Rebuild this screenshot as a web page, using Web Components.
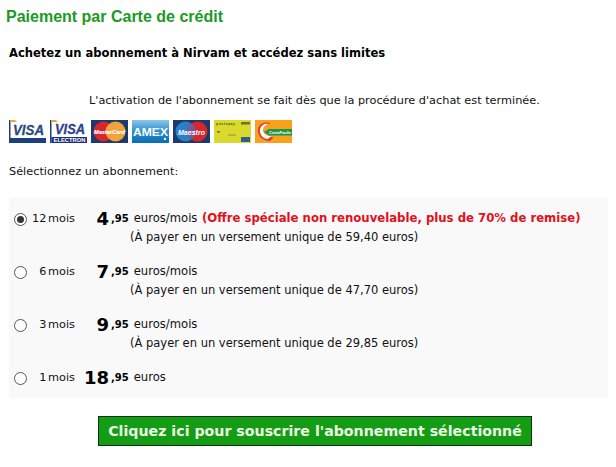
<!DOCTYPE html>
<html lang="fr">
<head>
<meta charset="utf-8">
<title>Paiement par Carte de crédit</title>
<style>
    html, body { margin: 0; background: #fff; }
    body { font-family: "DejaVu Sans", Verdana, sans-serif; font-size: 11.3px; color: #111; }
</style>
</head>
<body>
<payment-page>
    <card-logos slot="logos"></card-logos>
    <plan-row slot="plans" months="12 mois" whole="4" unit="euros/mois" note="(À payer en un versement unique de 59,40 euros)" selected>
        <b>(Offre spéciale non renouvelable, plus de 70% de remise)</b>
    </plan-row>
    <plan-row slot="plans" months="6 mois" whole="7" unit="euros/mois" note="(À payer en un versement unique de 47,70 euros)"></plan-row>
    <plan-row slot="plans" months="3 mois" whole="9" unit="euros/mois" note="(À payer en un versement unique de 29,85 euros)"></plan-row>
    <plan-row slot="plans" months="1 mois" whole="18" unit="euros"></plan-row>
</payment-page>

<script>
const pageTemplate = document.createElement('template');
pageTemplate.innerHTML = `
    <style>
        :host {
            display: block;
            width: 616px;
            height: 467px;
            overflow: hidden;
        }
        h1 {
            font: bold 16px "Liberation Sans", Arial, sans-serif;
            color: #1a9a1f;
            margin: 0;
            padding: 7px 0 0 6px;
            line-height: 19px;
        }
        h2 {
            font-size: 11.55px;
            font-weight: bold;
            color: #000;
            margin: 0;
            padding: 20px 0 0 9px;
            line-height: 14px;
        }
        .intro {
            margin: 0;
            padding: 34px 0 0 89px;
            line-height: 14px;
        }
        .logos {
            padding: 12px 0 0 9px;
            height: 23px;
        }
        .pick {
            margin: 0;
            padding: 22px 0 0 9px;
            line-height: 14px;
        }
        .plans {
            margin: 18px 0 0 9px;
            width: 599px;
            height: 201px;
            background: #f9f9f9;
            box-sizing: border-box;
        }
        .action {
            display: flex;
            padding: 18px 0 0 98px;
        }
        button {
            font-family: "DejaVu Sans", Verdana, sans-serif;
            font-size: 14.2px;
            font-weight: bold;
            white-space: nowrap;
            color: #eaf7e4;
            background: #149c14;
            border: 1px solid #04360a;
            width: 434px;
            height: 30px;
            padding: 0;
            cursor: pointer;
        }
    </style>
    <h1>Paiement par Carte de crédit</h1>
    <h2>Achetez un abonnement à Nirvam et accédez sans limites</h2>
    <p class="intro">L'activation de l'abonnement se fait dès que la procédure d'achat est terminée.</p>
    <div class="logos"><slot name="logos"></slot></div>
    <p class="pick">Sélectionnez un abonnement:</p>
    <div class="plans"><slot name="plans"></slot></div>
    <div class="action"><button type="button">Cliquez ici pour souscrire l'abonnement sélectionné</button></div>
`;

class PaymentPage extends HTMLElement {
    constructor() {
        super();
        this.attachShadow({ mode: 'open' });
        this.shadowRoot.appendChild(pageTemplate.content.cloneNode(true));
    }
}

const logosTemplate = document.createElement('template');
logosTemplate.innerHTML = `
    <style>
        :host { display: flex; gap: 4px; }
        svg { display: block; width: 37px; height: 23px; }
        text { font-family: "Liberation Sans", Arial, sans-serif; }
    </style>
    <!-- visa -->
    <svg viewBox="0 0 37 23">
        <rect width="37" height="23" fill="#fff"/>
        <path d="M0 0H1.5V18H37V23H0Z" fill="#1c3f80"/>
        <path d="M1 0H6L8 2H1Z" fill="#e2a93a"/>
        <text x="19.5" y="14.5" text-anchor="middle" font-size="14" font-weight="bold" font-style="italic" fill="#27497f" stroke="#27497f" stroke-width="0.3" textLength="31" lengthAdjust="spacingAndGlyphs">VISA</text>
    </svg>
    <!-- visa electron -->
    <svg viewBox="0 0 37 23">
        <rect width="37" height="23" fill="#fff"/>
        <path d="M0 0H1.5V23H0Z" fill="#1c3f80"/>
        <path d="M1 0H6L8 2H1Z" fill="#e2a93a"/>
        <text x="20" y="14" text-anchor="middle" font-size="14" font-weight="bold" font-style="italic" fill="#2a3f8c" stroke="#2a3f8c" stroke-width="0.3" textLength="30" lengthAdjust="spacingAndGlyphs">VISA</text>
        <rect x="1.5" y="17" width="35.5" height="6" fill="#1b2f7c"/>
        <text x="19.5" y="22" text-anchor="middle" font-size="5.4" font-weight="bold" fill="#fff" textLength="32" lengthAdjust="spacingAndGlyphs">ELECTRON</text>
    </svg>
    <!-- mastercard -->
    <svg viewBox="0 0 37 23">
        <rect width="37" height="23" fill="#1d3a6e"/>
        <circle cx="12.5" cy="11.5" r="10" fill="#d8262e"/>
        <circle cx="24.5" cy="11.5" r="10" fill="#f0a33a"/>
        <text x="18.5" y="13.8" text-anchor="middle" font-size="5.9" font-weight="bold" font-style="italic" fill="#fff" stroke="#fff" stroke-width="0.15" textLength="31" lengthAdjust="spacingAndGlyphs">MasterCard</text>
    </svg>
    <!-- amex -->
    <svg viewBox="0 0 37 23">
        <defs><linearGradient id="amex" x1="0" y1="0" x2="0" y2="1">
            <stop offset="0" stop-color="#8cc4e6"/><stop offset="0.5" stop-color="#2d8fd0"/><stop offset="1" stop-color="#0a6db4"/>
        </linearGradient></defs>
        <rect width="37" height="23" fill="url(#amex)"/>
        <text x="18.5" y="15.5" text-anchor="middle" font-size="11.5" font-weight="bold" fill="#fff" textLength="35" lengthAdjust="spacingAndGlyphs">AMEX</text>
        <rect x="32" y="18" width="2" height="2" fill="#fff"/>
    </svg>
    <!-- maestro -->
    <svg viewBox="0 0 37 23">
        <rect width="37" height="23" fill="#1d3a6e"/>
        <circle cx="12.5" cy="11.5" r="10" fill="#2a80c8"/>
        <circle cx="24.5" cy="11.5" r="10" fill="#d8262e"/>
        <path d="M18.5 3.5a10 10 0 0 1 0 16a10 10 0 0 1 0-16Z" fill="#7a5a96"/>
        <text x="18.5" y="14.5" text-anchor="middle" font-size="7.8" font-weight="bold" font-style="italic" fill="#fff" textLength="27" lengthAdjust="spacingAndGlyphs">Maestro</text>
    </svg>
    <!-- postepay -->
    <svg viewBox="0 0 37 23">
        <rect width="37" height="23" fill="#d9d92e"/>
        <text x="2" y="4.5" font-size="3.6" font-style="italic" font-weight="bold" fill="#55581a" textLength="19">postepay</text>
        <rect x="27" y="2" width="9" height="2.5" fill="#6d7030"/>
        <rect x="3" y="11" width="3" height="1.5" fill="#6d7030"/>
        <rect x="14" y="14.5" width="8" height="1" fill="#8b8e3a"/>
        <rect x="27" y="17" width="9" height="5" fill="#2f5f8f"/>
    </svg>
    <!-- carta facile -->
    <svg viewBox="0 0 37 23">
        <rect width="37" height="23" fill="#f9a11b"/>
        <path d="M3 9C4 3 12 1 16 4C11 3 7 6 7 10C7 15 13 18 19 17L15 21C8 21 2 16 3 9Z" fill="#e0373c"/>
        <path d="M5 9C6 5 10 3 13 4C10 5 8 7 8 10C8 14 12 16 16 16L13 19C8 19 4 14 5 9Z" fill="#fff"/>
        <path d="M9 12L14 9H37V15.5H14Z" fill="#19964a"/>
        <text x="25" y="13.6" text-anchor="middle" font-size="4.2" font-weight="bold" fill="#fff" textLength="22" lengthAdjust="spacingAndGlyphs">CartaFacile</text>
    </svg>
`;

class CardLogos extends HTMLElement {
    constructor() {
        super();
        this.attachShadow({ mode: 'open' });
        this.shadowRoot.appendChild(logosTemplate.content.cloneNode(true));
    }
}

const planTemplate = document.createElement('template');
planTemplate.innerHTML = `
    <style>
        :host {
            display: grid;
            grid-template-columns: 5px 13px 48px 34px 2px 1fr;
            height: 53px;
            box-sizing: border-box;
            align-content: start;
            padding-top: 12px;
            line-height: 19px;
        }
        .radio {
            grid-column: 2;
            width: 13px;
            height: 13px;
            margin-top: 4px;
            box-sizing: border-box;
            border: 1px solid #555;
            border-radius: 50%;
            background: #fff;
            display: flex;
            align-items: center;
            justify-content: center;
        }
        :host([selected]) .radio::after {
            content: "";
            width: 7px;
            height: 7px;
            border-radius: 50%;
            background: #333;
        }
        .months { grid-column: 3; text-align: right; word-spacing: -2px; }
        .whole {
            grid-column: 4;
            text-align: right;
            font-weight: bold;
            font-size: 18px;
            color: #000;
            line-height: 19px;
        }
        .rest { grid-column: 6; white-space: nowrap; }
        .cents { font-size: 10px; font-weight: bold; color: #000; margin-right: 5px; }
        .unit { font-size: 11.6px; }
        .special { color: #e3101c; font-weight: bold; font-size: 11.7px; margin-left: 1px; }
        .note { grid-column: 6; margin-left: 19px; white-space: nowrap; font-size: 11.5px; }
    </style>
    <span class="radio"></span>
    <span class="months"></span>
    <span class="whole"></span>
    <span class="rest"><span class="cents">,95</span><span class="unit"></span> <span class="special"><slot></slot></span></span>
    <span class="note"></span>
`;

class PlanRow extends HTMLElement {
    constructor() {
        super();
        this.attachShadow({ mode: 'open' });
        this.shadowRoot.appendChild(planTemplate.content.cloneNode(true));
    }

    connectedCallback() {
        const root = this.shadowRoot;
        root.querySelector('.months').textContent = this.getAttribute('months');
        root.querySelector('.whole').textContent = this.getAttribute('whole');
        root.querySelector('.unit').textContent = this.getAttribute('unit');
        root.querySelector('.note').textContent = this.getAttribute('note') || '';
    }
}

customElements.define('payment-page', PaymentPage);
customElements.define('card-logos', CardLogos);
customElements.define('plan-row', PlanRow);
</script>
</body>
</html>
